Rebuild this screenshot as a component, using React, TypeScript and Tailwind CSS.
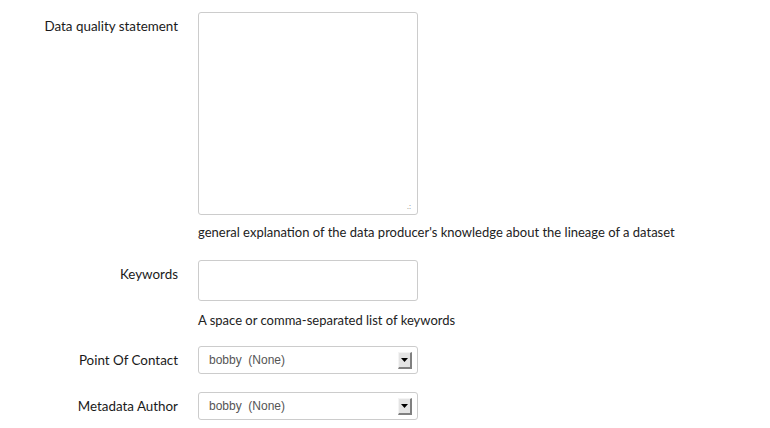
import React from "react";

function Label({ children, pt }: { children: React.ReactNode; pt: string }) {
  return (
    <div className={`w-[178px] shrink-0 text-right text-[13.4px] leading-[18px] text-[#1a1a1a] ${pt}`}>
      {children}
    </div>
  );
}

function Select() {
  return (
    <div className="w-[220px] h-[28px] border border-[#ccc] rounded-[3px] bg-white flex items-center justify-between pl-[10px] pr-[5px]">
      <span className="text-[12px] text-[#555]" style={{ fontFamily: '"Liberation Sans", Arial, sans-serif' }}>
        bobby&nbsp; (None)
      </span>
      <div className="w-[14px] h-[17px] bg-[#e4e4e4] border-t border-l border-t-[#f4f4f4] border-l-[#f4f4f4] border-r-2 border-b-2 border-r-[#808080] border-b-[#808080] flex items-center justify-center">
        <svg width="7" height="4" viewBox="0 0 7 4">
          <polygon points="0,0 7,0 3.5,4" fill="#000" />
        </svg>
      </div>
    </div>
  );
}

export default function App() {
  return (
    <div className="w-[770px] h-[428px] bg-white overflow-hidden" style={{ fontFamily: 'Lato, "Open Sans", sans-serif' }}>
      <div className="pt-[12px] flex flex-col">
        <div className="flex gap-[20px]">
          <Label pt="pt-[5px]">Data quality statement</Label>
          <div className="flex flex-col">
            <div className="relative w-[220px] h-[203px] border border-[#ccc] rounded-[3px]">
              <span className="absolute right-[6px] bottom-[4px] text-[8px] leading-[8px] text-[#999]">.:</span>
            </div>
            <div className="mt-[8px] text-[13px] leading-[18px] text-[#222] whitespace-nowrap">
              general explanation of the data producer's knowledge about the lineage of a dataset
            </div>
          </div>
        </div>
        <div className="flex gap-[20px] mt-[19px]">
          <Label pt="pt-[5px]">Keywords</Label>
          <div className="flex flex-col">
            <div className="w-[220px] h-[41px] border border-[#ccc] rounded-[3px]" />
            <div className="mt-[10px] text-[13px] leading-[18px] text-[#222] whitespace-nowrap">
              A space or comma-separated list of keywords
            </div>
          </div>
        </div>
        <div className="flex gap-[20px] mt-[17px]">
          <Label pt="pt-[5px]">Point Of Contact</Label>
          <Select />
        </div>
        <div className="flex gap-[20px] mt-[18px]">
          <Label pt="pt-[5px]">Metadata Author</Label>
          <Select />
        </div>
      </div>
    </div>
  );
}
